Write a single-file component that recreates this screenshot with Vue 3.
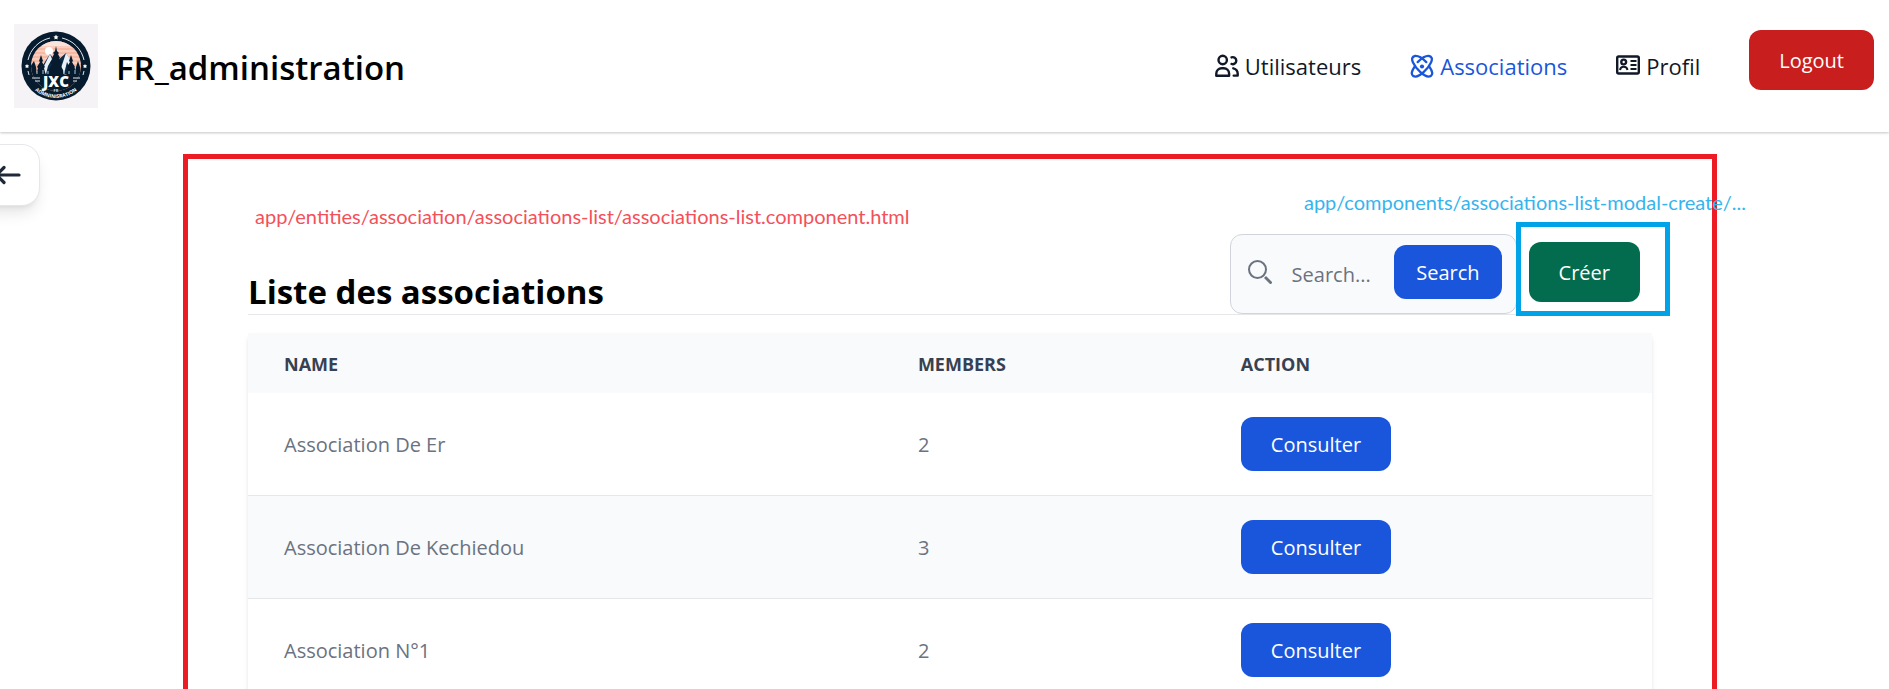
<script setup>
import { ref } from 'vue'

const query = ref('')
const associations = [
  { name: 'Association De Er', members: 2 },
  { name: 'Association De Kechiedou', members: 3 },
  { name: 'Association N°1', members: 2 },
]
</script>

<template>
  <div class="app">
    <header class="topbar">
      <a class="brand" href="#">
        <svg class="logo" viewBox="0 0 84 84" aria-hidden="true">
          <defs>
            <clipPath id="scene"><circle cx="42" cy="42" r="25" /></clipPath>
            <path id="ring" d="M10 42 A32 32 0 0 0 74 42" />
          </defs>
          <rect width="84" height="84" fill="#f5f3f6" />
          <circle cx="42" cy="42" r="34.5" fill="#061c2e" />
          <circle cx="42" cy="42" r="25" fill="#f6b9a3" />
          <g clip-path="url(#scene)">
            <rect x="16" y="16" width="52" height="6" fill="#fae3da" />
            <path d="M16 23h52M16 27h52M16 31h52M16 35h52M16 39h52" stroke="#fbe0d6" stroke-width="1" />
            <circle cx="35" cy="27" r="4" fill="#fff" />
            <path d="M22 52 36 30 42 38 52 29 64 50Z" fill="#0b2a45" />
            <path d="M27 48 36 30 38 35 34 42 32 50ZM45 50 52 29 60 41 56 44 53 38 50 50Z" fill="#e8f1f8" />
            <path d="M42 22 43 27 45 29 44 30 46 34 45 35 48 39 46 40 49 46 50 52H34l1-6 3-6-2-1 3-4-1-1 2-4-1-1 2-2Z" fill="#061c2e" />
            <path d="M27 31 29 37 28 38 31 43 30 44 32 52H22l2-8-1-1 3-5-1-1ZM57 31 59 37 58 38 61 43 60 44 62 52H52l2-8-1-1 3-5-1-1ZM20 37l2 6 1 9h-7v-9ZM64 37l2 6 2 9h-7l1-9Z" fill="#061c2e" />
            <path d="M23 50v-3M29 50v-4M34 50v-3M50 50v-4M55 50v-3M61 50v-4" stroke="#aac3da" stroke-width="1" />
            <rect x="14" y="51" width="56" height="20" fill="#061c2e" />
          </g>
          <path d="M14 36A29 29 0 0 1 36 14M48 14A29 29 0 0 1 70 36M14 47l1 4M70 47l-1 4M18 54h8M21 57h5M59 54h7M59 57h4" fill="none" stroke="#dfe7ee" stroke-width="1" />
          <path d="M42 10.500l.8 1.700 1.800.2-1.300 1.300.3 1.900-1.600-.9-1.600.9.3-1.900-1.300-1.300 1.800-.2ZM13 40l.7 1.300 1.500.2-1 1.100.2 1.500-1.400-.7-1.400.7.2-1.500-1-1.100 1.500-.2ZM71 40l.7 1.300 1.500.2-1 1.100.2 1.500-1.400-.7-1.400.7.2-1.500-1-1.100 1.500-.2Z" fill="#fff" />
          <text x="42" y="63" text-anchor="middle" class="logo-main">JXC</text>
          <text x="42" y="68" text-anchor="middle" class="logo-tiny">FR</text>
          <text class="logo-ring" text-anchor="middle"><textPath href="#ring" startOffset="50%">ADMNINISRATION</textPath></text>
        </svg>
        <span class="brand-name">FR_administration</span>
      </a>
      <nav class="nav">
        <a class="nav-link" href="#">
          <svg class="icon" width="24" height="24" viewBox="0 0 24 24" aria-hidden="true">
            <g fill="none" stroke="currentColor" stroke-width="2.400" stroke-linecap="round" stroke-linejoin="round">
              <circle cx="7.700" cy="6" r="4.200" />
              <path d="M1.300 21.800v-2.300a5.300 5.300 0 0 1 5.300-5.300h2.200a5.300 5.300 0 0 1 5.300 5.300v2.300Z" />
              <path d="M16.500 3.400a3.500 3.500 0 1 1 0 6.500M18.300 14.300c3 .7 4.400 2.800 4.400 5.400v1.900h-4" />
            </g>
          </svg>
          Utilisateurs
        </a>
        <a class="nav-link active" href="#">
          <svg class="icon" width="24" height="24" viewBox="0 0 24 24" aria-hidden="true">
            <g fill="none" stroke="currentColor" stroke-width="2.300" stroke-linecap="round">
              <path d="M7.700 8.100C11.300 4.500 16 1.700 19 2s3.600 3.200 2 6.500c-1.500 3.200-4.200 6.800-7.400 9.700C10 21.500 5.500 23.400 3.200 22s-1.800-4.700 1.300-9.200" />
              <path d="M16.300 8.100C12.700 4.500 8 1.700 5 2S1.400 5.200 3 8.500c1.500 3.200 4.200 6.800 7.400 9.700C14 21.500 18.500 23.400 20.800 22s1.800-4.700-1.300-9.200" />
            </g>
            <circle cx="12" cy="12.500" r="2.100" fill="currentColor" />
          </svg>
          Associations
        </a>
        <a class="nav-link" href="#">
          <svg class="icon" width="24" height="24" viewBox="0 0 24 24" aria-hidden="true">
            <g fill="none" stroke="currentColor" stroke-width="2.400">
              <rect x="1.200" y="2.500" width="21.600" height="17" rx="1.500" />
              <circle cx="7.700" cy="8" r="2.400" />
              <path d="M4 16c.5-2.800 2-3.300 3.700-3.300s3.300.5 3.800 3.300M14.500 7h6M14.500 11h6M14.500 15h6" stroke-width="2" />
            </g>
          </svg>
          Profil
        </a>
        <button class="btn danger" type="button">Logout</button>
      </nav>
    </header>

    <button class="drawer-toggle" type="button" aria-label="Menu">
      <svg width="26" height="20" viewBox="0 0 26 20" aria-hidden="true">
        <path d="M24 10H3M9 2.500 1.500 10 9 17.500" fill="none" stroke="currentColor" stroke-width="3.200" stroke-linecap="round" stroke-linejoin="round" />
      </svg>
    </button>

    <main class="frame">
      <p class="note note-list">app/entities/association/associations-list/associations-list.component.html</p>
      <p class="note note-create">app/components/associations-list-modal-create/...</p>

      <div class="toolbar">
        <h1>Liste des associations</h1>
        <div class="tools">
          <form class="search" @submit.prevent>
            <svg class="search-icon" width="24" height="24" viewBox="0 0 24 24" aria-hidden="true">
              <g fill="none" stroke="currentColor" stroke-width="2">
                <circle cx="9.500" cy="9.500" r="8.500" />
                <path d="m17 17 6.500 6.500" stroke-width="2.800" />
              </g>
            </svg>
            <input v-model="query" type="search" placeholder="Search..." aria-label="Search" />
            <button class="btn primary compact" type="submit">Search</button>
          </form>
          <div class="create">
            <button class="btn success" type="button">Créer</button>
          </div>
        </div>
      </div>

      <table class="list">
        <colgroup>
          <col class="col-name" />
          <col class="col-members" />
          <col />
        </colgroup>
        <thead>
          <tr>
            <th scope="col">Name</th>
            <th scope="col">Members</th>
            <th scope="col">Action</th>
          </tr>
        </thead>
        <tbody>
          <tr v-for="item in associations" :key="item.name">
            <td class="text">{{ item.name }}</td>
            <td class="text">{{ item.members }}</td>
            <td><button class="btn primary" type="button">Consulter</button></td>
          </tr>
        </tbody>
      </table>
    </main>
  </div>
</template>

<style>
body {
  margin: 0;
}
</style>

<style scoped>
.app {
  position: relative;
  box-sizing: border-box;
  display: flex;
  flex-direction: column;
  height: 100vh;
  overflow: hidden;
  background: #fff;
  color: #000;
  font-family: "Open Sans", "Noto Sans", sans-serif;
  font-size: 20px;
  line-height: 30px;
}

.topbar {
  flex: none;
  display: flex;
  align-items: center;
  justify-content: space-between;
  padding: 24px 15px 24px 14px;
  background: #fff;
  box-shadow: 0 1px 3px rgba(0, 0, 0, 0.14), 0 1px 2px rgba(0, 0, 0, 0.1);
}

.brand {
  display: flex;
  align-items: center;
  gap: 18px;
  color: #000;
  text-decoration: none;
}

.logo {
  display: block;
  width: 84px;
  height: 84px;
}

.logo-main {
  font: 800 15px "Open Sans", sans-serif;
  fill: #fff;
}

.logo-tiny {
  font: 700 4px "Open Sans", sans-serif;
  fill: #cfd8e0;
}

.logo-ring {
  font: 700 5px "Open Sans", sans-serif;
  fill: #fff;
}

.brand-name {
  padding-top: 3px;
  font-size: 33px;
  font-weight: 600;
  line-height: 48px;
}

.nav {
  display: flex;
  align-items: center;
  gap: 49px;
}

.nav-link {
  display: flex;
  align-items: center;
  gap: 6px;
  color: #111827;
  font-size: 22px;
  text-decoration: none;
}

.nav-link.active {
  color: #1a56db;
}

.icon {
  flex: none;
}

.btn {
  display: block;
  padding: 13px 30px 11px;
  border: 0;
  border-radius: 12px;
  color: #fff;
  font: inherit;
  white-space: nowrap;
}

.danger {
  margin-bottom: 12px;
  padding: 16px 30px 14px;
  background: #c81e1e;
}

.success {
  margin-bottom: 12px;
  padding: 16px 30px 14px;
  background: #046c4e;
}

.primary {
  background: #1a56db;
}

.compact {
  padding: 13px 22px 11px;
}

.drawer-toggle {
  position: absolute;
  top: 144px;
  left: -36px;
  display: flex;
  align-items: center;
  justify-content: flex-end;
  width: 76px;
  height: 62px;
  padding: 0 18px 0 0;
  border: 1px solid #e5e7eb;
  border-radius: 18px;
  background: #fff;
  color: #1f2937;
  box-shadow: 0 10px 15px -3px rgba(0, 0, 0, 0.1), 0 4px 6px -4px rgba(0, 0, 0, 0.1);
}

.frame {
  position: relative;
  flex: 1 0 auto;
  margin: 22px 172px 0 183px;
  padding: 75px 60px 0;
  border: 5px solid #ed1c24;
  border-bottom: 0;
}

.note {
  position: absolute;
  margin: 0;
  font-family: Lato, sans-serif;
  font-size: 20px;
  line-height: 24px;
  white-space: nowrap;
}

.note-list {
  top: 45px;
  left: 67px;
  color: #f4505a;
}

.note-create {
  top: 31px;
  right: -34px;
  color: #36b4ee;
}

.toolbar {
  display: flex;
  align-items: flex-end;
  justify-content: space-between;
  border-bottom: 1px solid #e5e7eb;
}

h1 {
  margin: 0;
  font-size: 33px;
  font-weight: 700;
  line-height: 44px;
}

.tools {
  display: flex;
  align-items: flex-end;
  gap: 12px;
}

.search {
  box-sizing: border-box;
  display: flex;
  align-items: center;
  width: 287px;
  height: 80px;
  padding: 0 14px 4px 17px;
  border: 1px solid #d1d5db;
  border-radius: 12px;
  background: #f9fafb;
}

.search-icon {
  flex: none;
  color: #6b7280;
}

input {
  flex: 1;
  min-width: 0;
  padding: 6px 0 0 20px;
  border: 0;
  outline: 0;
  background: transparent;
  color: #111827;
  font: inherit;
}

input::placeholder {
  color: #6b7280;
  opacity: 1;
}

.create {
  position: relative;
  margin-right: 12px;
}

.create::after {
  content: "";
  position: absolute;
  inset: -20px -30px -2px -13px;
  border: 5px solid #00a2e8;
  pointer-events: none;
}

.list {
  width: 100%;
  margin-top: 18px;
  border-collapse: collapse;
  table-layout: fixed;
  color: #6b7280;
  text-align: left;
  box-shadow: 0 4px 6px -1px rgba(0, 0, 0, 0.1), 0 2px 4px -2px rgba(0, 0, 0, 0.1);
}

.col-name {
  width: 45.15%;
}

.col-members {
  width: 23%;
}

th {
  padding: 19px 36px 17px;
  background: #f9fafb;
  color: #374151;
  font-size: 18px;
  font-weight: 700;
  line-height: 24px;
  text-transform: uppercase;
}

td {
  padding: 24px 36px;
  border-bottom: 1px solid #e5e7eb;
}

td.text {
  padding-top: 26px;
}

tbody tr {
  background: #fff;
}

tbody tr:nth-child(even) {
  background: #f9fafb;
}
</style>
